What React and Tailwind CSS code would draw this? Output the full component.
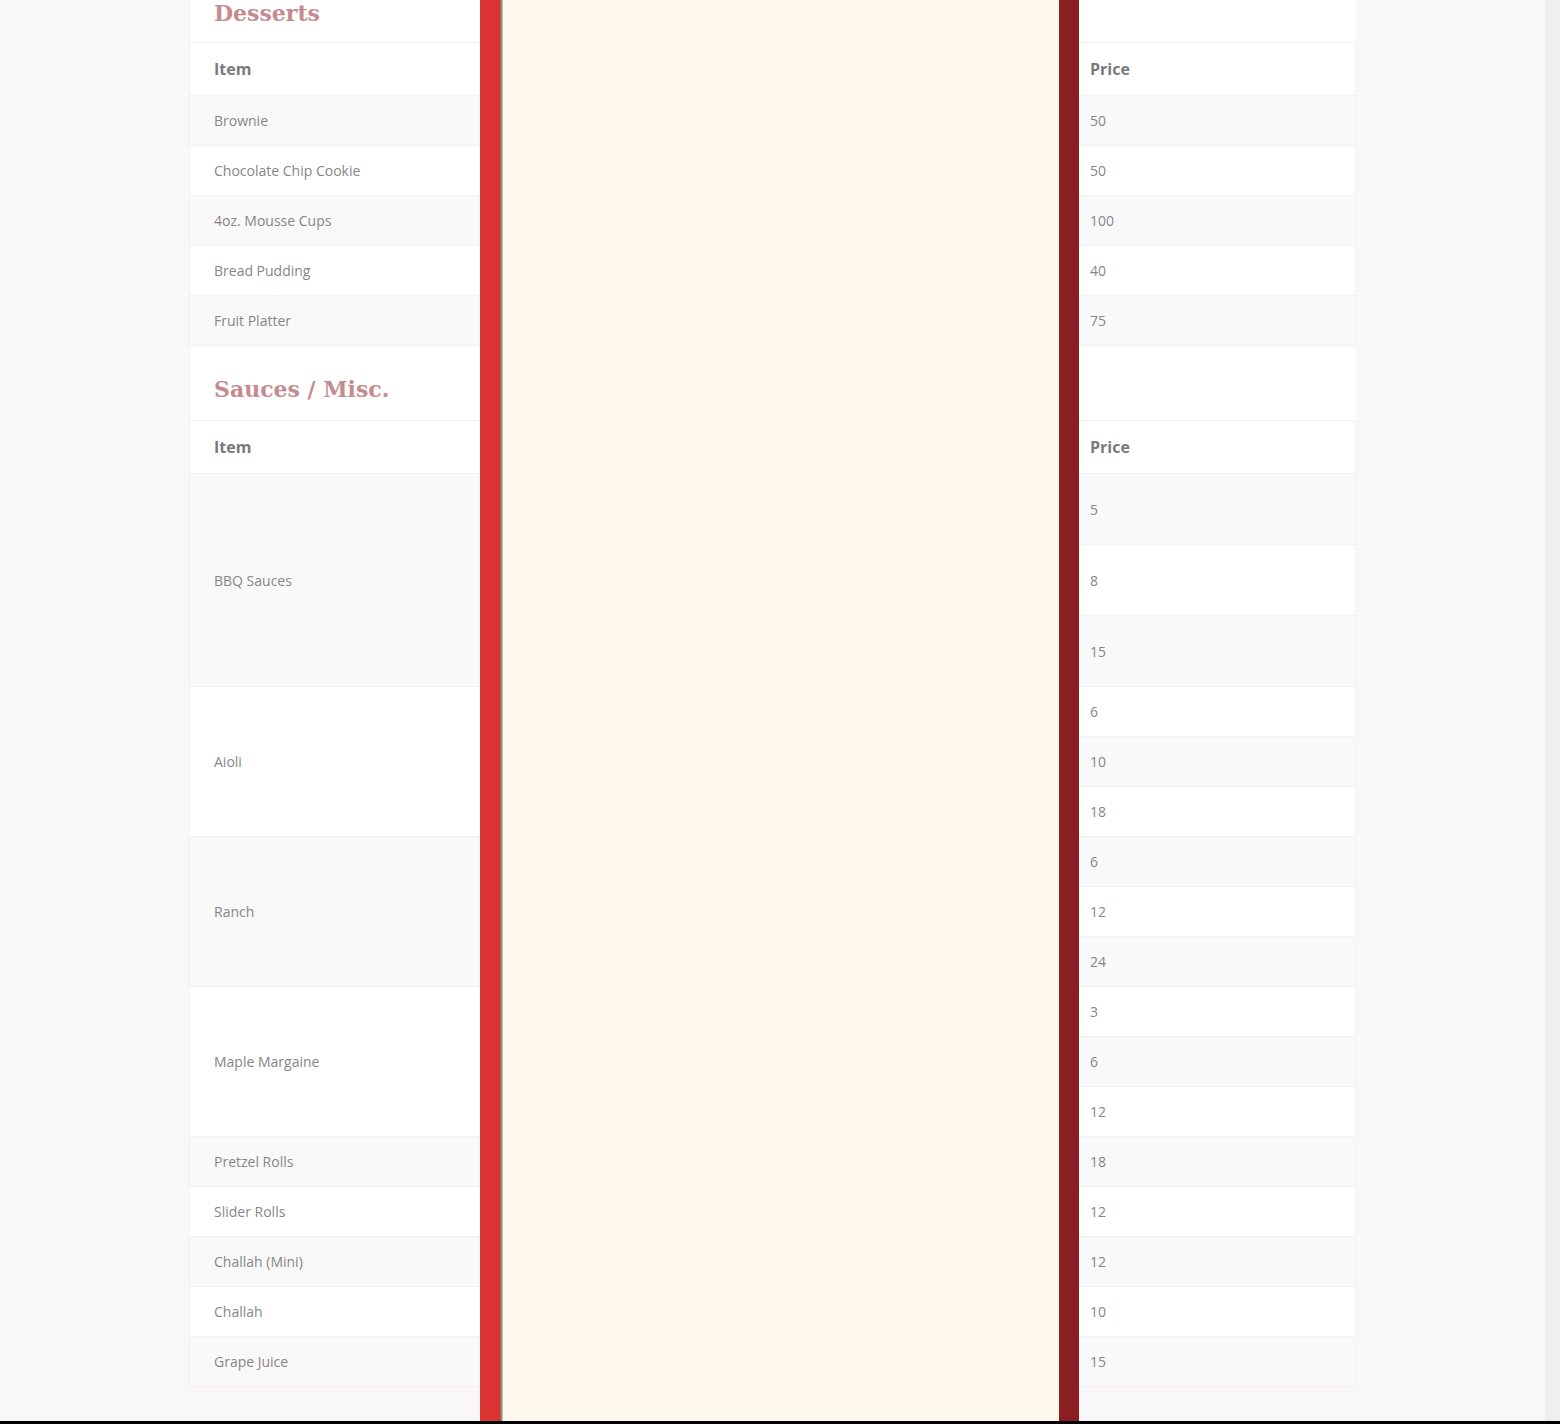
import React from "react";

const desserts = [
  ["Brownie", "50"],
  ["Chocolate Chip Cookie", "50"],
  ["4oz. Mousse Cups", "100"],
  ["Bread Pudding", "40"],
  ["Fruit Platter", "75"],
];

const sauces = [
  { item: "BBQ Sauces", prices: ["5", "8", "15"], h: "h-[71px]" },
  { item: "Aioli", prices: ["6", "10", "18"], h: "h-[50px]" },
  { item: "Ranch", prices: ["6", "12", "24"], h: "h-[50px]" },
  { item: "Maple Margaine", prices: ["3", "6", "12"], h: "h-[50px]" },
  { item: "Pretzel Rolls", prices: ["18"], h: "h-[50px]" },
  { item: "Slider Rolls", prices: ["12"], h: "h-[50px]" },
  { item: "Challah (Mini)", prices: ["12"], h: "h-[50px]" },
  { item: "Challah", prices: ["10"], h: "h-[50px]" },
  { item: "Grape Juice", prices: ["15"], h: "h-[50px]" },
];

const font = { fontFamily: '"Open Sans", "Liberation Sans", sans-serif' };

function Heading({ children, className = "" }) {
  return (
    <div
      className={`col-span-3 flex items-end bg-white border-b border-[#f1f1f1] pl-[24px] ${className}`}
    >
      <h2
        className="text-[22px] leading-[26px] font-bold text-[#c68b8f]"
        style={{ fontFamily: '"DejaVu Serif", "Liberation Serif", serif' }}
      >
        {children}
      </h2>
    </div>
  );
}

function HeaderRow() {
  return (
    <>
      <div className="h-[53px] bg-white border-b border-[#f1f1f1] pl-[24px] flex items-center text-[16px] font-bold text-[#7a7a7a]">
        Item
      </div>
      <div className="h-[53px] bg-white border-b border-[#f1f1f1]" />
      <div className="h-[53px] bg-white border-b border-[#f1f1f1] border-r border-r-[#f3f3f3] pl-[10px] flex items-center text-[16px] font-bold text-[#7a7a7a]">
        Price
      </div>
    </>
  );
}

export default function App() {
  let tr = 0;
  const sauceCells = [];
  sauces.forEach((s, si) => {
    const span = s.prices.length;
    const firstBg = tr % 2 === 0 ? "bg-[#f9f9f9]" : "bg-white";
    const spanCls = span === 3 ? "row-span-3" : "";
    sauceCells.push(
      <div
        key={`i${si}`}
        className={`${spanCls} ${firstBg} border-b border-[#f1f1f1] pl-[24px] flex items-center text-[14px] text-[#868686]`}
      >
        {s.item}
      </div>
    );
    sauceCells.push(
      <div key={`m${si}`} className={`${spanCls} ${firstBg} border-b border-[#f1f1f1]`} />
    );
    s.prices.forEach((p, pi) => {
      const bg = tr % 2 === 0 ? "bg-[#f9f9f9]" : "bg-white";
      sauceCells.push(
        <div
          key={`p${si}-${pi}`}
          className={`${s.h} ${bg} border-b border-[#f1f1f1] border-r border-r-[#f3f3f3] pl-[10px] flex items-center text-[14px] text-[#868686]`}
        >
          {p}
        </div>
      );
      tr++;
    });
  });

  return (
    <div className="h-[1424px] w-full flex flex-col overflow-hidden bg-[#f9f7f7]" style={font}>
      <div className="flex-1 flex min-h-0">
        <div className="relative flex-1 overflow-hidden">
          <div className="ml-[189px] w-[1167px] mt-[-33px] grid grid-cols-[290px_600px_1fr] border-l border-[#f3f2f2]">
            <Heading className="h-[76px] pb-[16px]">Desserts</Heading>
            <HeaderRow />
            {desserts.map(([item, price], i) => {
              const bg = i % 2 === 0 ? "bg-[#f9f9f9]" : "bg-white";
              return (
                <React.Fragment key={item}>
                  <div className={`h-[50px] ${bg} border-b border-[#f1f1f1] pl-[24px] flex items-center text-[14px] text-[#868686]`}>
                    {item}
                  </div>
                  <div className={`h-[50px] ${bg} border-b border-[#f1f1f1]`} />
                  <div className={`h-[50px] ${bg} border-b border-[#f1f1f1] border-r border-r-[#f3f3f3] pl-[10px] flex items-center text-[14px] text-[#868686]`}>
                    {price}
                  </div>
                </React.Fragment>
              );
            })}
            <Heading className="h-[75px] pb-[18px]">Sauces / Misc.</Heading>
            <HeaderRow />
            {sauceCells}
          </div>

          {/* decorative spine overlay */}
          <div className="absolute top-0 bottom-0 left-[480px] flex">
            <div className="w-[20px] bg-[#dd3333]" />
            <div className="w-[3px] bg-gradient-to-r from-[#6e5a50] to-[#d9d0c0]" />
            <div className="w-[556px] bg-[#fef9ec]" />
            <div className="w-[20px] bg-[#8b1e22]" />
          </div>
        </div>
        <div className="w-[15px] bg-[#efefef]" />
      </div>
      <div className="h-[3px] bg-black" />
    </div>
  );
}
